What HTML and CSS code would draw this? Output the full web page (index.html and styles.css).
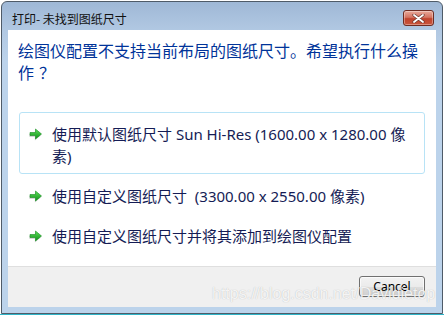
FILE: index.html
```html
<!DOCTYPE html>
<html lang="zh-CN">
<head>
    <meta charset="UTF-8">
    <title>打印- 未找到图纸尺寸</title>
    <link rel="stylesheet" href="styles.css">
</head>
<body>
    <div class="window">
        <div class="titlebar">
            <span class="title">打印- 未找到图纸尺寸</span>
            <button class="close-btn" aria-label="关闭">
                <svg width="13" height="9" viewBox="0 0 13 9">
                    <path d="M2 1 L11 8 M11 1 L2 8" stroke="#6a3a32" stroke-width="3.2" stroke-linecap="round"/>
                    <path d="M2 1 L11 8 M11 1 L2 8" stroke="#ffffff" stroke-width="1.8" stroke-linecap="round"/>
                </svg>
            </button>
        </div>

        <div class="client">
            <h1 class="instruction">绘图仪配置不支持当前布局的图纸尺寸。希望执行什么操作<span class="qmark">？</span></h1>

            <div class="commands">
                <div class="cmd focused">
                    <svg class="arrow" width="14" height="13" viewBox="0 0 14 13">
                        <defs>
                            <linearGradient id="g1" x1="0" y1="0" x2="0" y2="1">
                                <stop offset="0" stop-color="#5fe05a"/>
                                <stop offset="1" stop-color="#0d8f18"/>
                            </linearGradient>
                        </defs>
                        <path d="M1 5 H6.5 V1.5 L12.5 6.5 L6.5 11.5 V8 H1 Z" fill="#b9b9b9" transform="translate(-0.6 1)" opacity="0.6"/>
                        <path d="M1 4.5 H6.5 V1 L12.5 6 L6.5 11 V7.5 H1 Z" fill="url(#g1)" stroke="#128a1c" stroke-width="0.6"/>
                    </svg>
                    <span class="cmd-text">使用默认图纸尺寸 Sun Hi-Res (1600.00 x 1280.00 像素)</span>
                </div>
                <div class="cmd">
                    <svg class="arrow" width="14" height="13" viewBox="0 0 14 13">
                        <path d="M1 5 H6.5 V1.5 L12.5 6.5 L6.5 11.5 V8 H1 Z" fill="#b9b9b9" transform="translate(-0.6 1)" opacity="0.6"/>
                        <path d="M1 4.5 H6.5 V1 L12.5 6 L6.5 11 V7.5 H1 Z" fill="url(#g1)" stroke="#128a1c" stroke-width="0.6"/>
                    </svg>
                    <span class="cmd-text">使用自定义图纸尺寸&nbsp; (3300.00 x 2550.00 像素)</span>
                </div>
                <div class="cmd">
                    <svg class="arrow" width="14" height="13" viewBox="0 0 14 13">
                        <path d="M1 5 H6.5 V1.5 L12.5 6.5 L6.5 11.5 V8 H1 Z" fill="#b9b9b9" transform="translate(-0.6 1)" opacity="0.6"/>
                        <path d="M1 4.5 H6.5 V1 L12.5 6 L6.5 11 V7.5 H1 Z" fill="url(#g1)" stroke="#128a1c" stroke-width="0.6"/>
                    </svg>
                    <span class="cmd-text">使用自定义图纸尺寸并将其添加到绘图仪配置</span>
                </div>
            </div>

            <div class="footer">
                <button class="button">Cancel</button>
                <span class="watermark">https://blog.csdn.net/Davidietop</span>
            </div>
        </div>
    </div>
</body>
</html>
```

FILE: styles.css
```css
html, body {
    margin: 0;
    padding: 0;
}
body {
    width: 444px;
    height: 315px;
    overflow: hidden;
    background: #ffffff;
    border-bottom: 1px solid #2fb4c8;
    box-sizing: border-box;
}
.window {
    margin: 1px 1px 0 1px;
    width: 442px;
    height: 313px;
    box-sizing: border-box;
    border: 1px solid #4f5b68;
    border-radius: 6px 6px 0 0;
    padding: 0 6px 6px 6px;
    background: linear-gradient(to bottom, #9fb8d6 0px, #b2c9e3 30px, #bcd3eb 60px, #bcd3eb 100%);
    display: flex;
    flex-direction: column;
    font-family: "Noto Sans", "Noto Sans CJK SC", sans-serif;
}
.titlebar {
    height: 28px;
    box-sizing: border-box;
    padding: 4px 2px 0 4px;
    display: flex;
    align-items: center;
    justify-content: space-between;
}
.title {
    font-family: "Noto Sans CJK SC", sans-serif;
    font-size: 12px;
    color: #111;
}
.close-btn {
    width: 31px;
    height: 16px;
    padding: 0;
    border: 1px solid #6e2c22;
    border-radius: 3px;
    background: linear-gradient(to bottom, #e9a99a 0%, #d47462 45%, #c0432d 55%, #c9553c 100%);
    display: flex;
    align-items: center;
    justify-content: center;
    box-shadow: inset 0 0 0 1px rgba(255, 255, 255, 0.35);
}
.client {
    flex: 1;
    background: #ffffff;
    display: flex;
    flex-direction: column;
}
.instruction {
    margin: 9px 0 0 10px;
    width: 412px;
    font-family: "Noto Sans CJK SC", sans-serif;
    font-weight: normal;
    font-size: 16px;
    line-height: 22px;
    color: #003399;
}
.qmark {
    display: inline-block;
    padding-left: 5px;
}
.commands {
    margin-top: 29px;
    padding: 0 11px;
}
.cmd {
    display: flex;
    align-items: flex-start;
    padding: 10px 6px 6px 9px;
    border: 1px solid transparent;
    border-radius: 3px;
}
.cmd.focused {
    border-color: #b8e3f6;
}
.arrow {
    flex: none;
    margin: 5px 9px 0 0;
}
.cmd-text {
    font-size: 15px;
    line-height: 22px;
    color: #151c55;
}
.footer {
    margin-top: auto;
    height: 41px;
    box-sizing: border-box;
    background: #f0f0f0;
    border-top: 1px solid #dfdfdf;
    padding: 9px 11px 0 0;
    display: flex;
    justify-content: flex-end;
    align-items: flex-start;
    position: relative;
}
.button {
    width: 66px;
    height: 21px;
    padding: 0;
    border: 1px solid #707070;
    border-radius: 3px;
    background: linear-gradient(to bottom, #f2f2f2 0%, #ebebeb 50%, #dddddd 51%, #cfcfcf 100%);
    box-shadow: inset 0 0 0 1px rgba(255, 255, 255, 0.7);
    font-family: "Noto Sans", sans-serif;
    font-size: 12px;
    color: #000;
}
.watermark {
    position: absolute;
    left: 204px;
    top: 18px;
    font-family: "Liberation Sans", Arial, sans-serif;
    font-size: 16px;
    color: rgba(255, 255, 255, 0.85);
    text-shadow: 0 0 1px rgba(0, 0, 0, 0.25);
    white-space: nowrap;
}
```
